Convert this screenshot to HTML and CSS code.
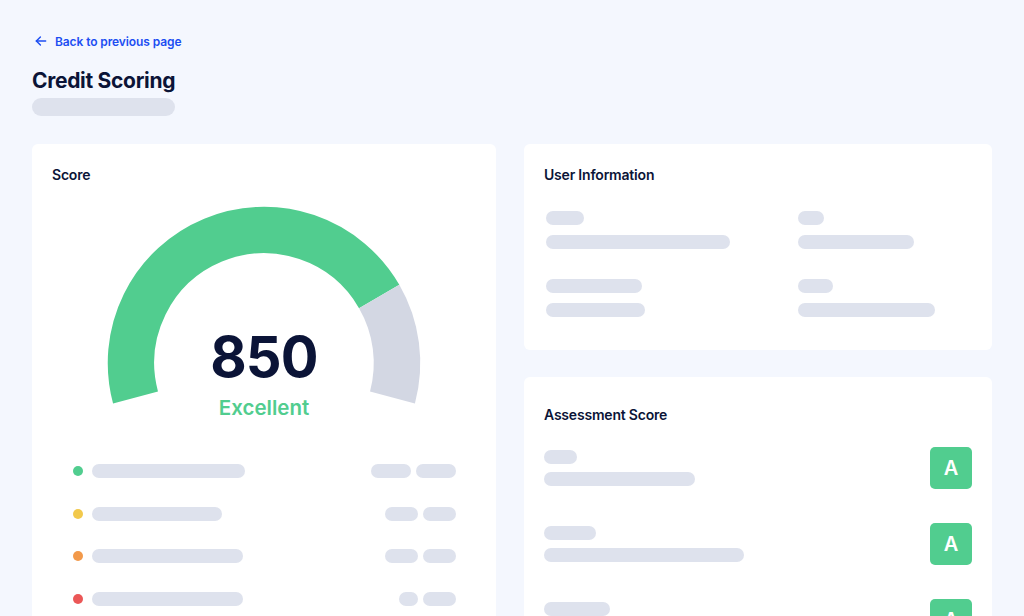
FILE: index.html
```html
<!DOCTYPE html>
<html lang="en">
<head>
    <meta charset="UTF-8">
    <meta name="viewport" content="width=device-width, initial-scale=1.0">
    <title>Credit Scoring</title>
    <link rel="stylesheet" href="styles.css">
</head>
<body>
    <div class="page">
        <header class="page-header">
            <a class="back-link" href="#">
                <svg width="14" height="14" viewBox="0 0 24 24" fill="none" stroke="currentColor" stroke-width="2.4" stroke-linecap="round" stroke-linejoin="round">
                    <path d="M20 12H4"/>
                    <path d="M11 19l-7-7 7-7"/>
                </svg>
                Back to previous page
            </a>
            <h1>Credit Scoring</h1>
            <div class="skeleton subtitle"></div>
        </header>

        <div class="layout">
            <section class="card score-card">
                <h2>Score</h2>

                <div class="gauge">
                    <svg width="320" height="204" viewBox="0 0 320 204">
                        <!-- green part: 195deg -> 30deg, grey part: 30deg -> -15deg -->
                        <path d="M31.53 194.42 A133 133 0 0 1 275.18 93.5" fill="none" stroke="#51cd8f" stroke-width="46.5"/>
                        <path d="M275.18 93.5 A133 133 0 0 1 288.47 194.42" fill="none" stroke="#d3d7e3" stroke-width="46.5"/>
                    </svg>
                    <div class="gauge-value">850</div>
                    <div class="gauge-label">Excellent</div>
                </div>

                <ul class="legend">
                    <li>
                        <span class="dot green"></span>
                        <span class="skeleton" style="width: 153px"></span>
                        <span class="pills">
                            <span class="skeleton" style="width: 40px"></span>
                            <span class="skeleton" style="width: 40px"></span>
                        </span>
                    </li>
                    <li>
                        <span class="dot yellow"></span>
                        <span class="skeleton" style="width: 130px"></span>
                        <span class="pills">
                            <span class="skeleton" style="width: 33px"></span>
                            <span class="skeleton" style="width: 33px"></span>
                        </span>
                    </li>
                    <li>
                        <span class="dot orange"></span>
                        <span class="skeleton" style="width: 151px"></span>
                        <span class="pills">
                            <span class="skeleton" style="width: 33px"></span>
                            <span class="skeleton" style="width: 33px"></span>
                        </span>
                    </li>
                    <li>
                        <span class="dot red"></span>
                        <span class="skeleton" style="width: 151px"></span>
                        <span class="pills">
                            <span class="skeleton" style="width: 19px"></span>
                            <span class="skeleton" style="width: 33px"></span>
                        </span>
                    </li>
                </ul>
            </section>

            <div class="side">
                <section class="card info-card">
                    <h2>User Information</h2>
                    <div class="info-grid">
                        <div class="field">
                            <span class="skeleton" style="width: 38px"></span>
                            <span class="skeleton" style="width: 184px"></span>
                        </div>
                        <div class="field">
                            <span class="skeleton" style="width: 26px"></span>
                            <span class="skeleton" style="width: 116px"></span>
                        </div>
                        <div class="field">
                            <span class="skeleton" style="width: 96px"></span>
                            <span class="skeleton" style="width: 99px"></span>
                        </div>
                        <div class="field">
                            <span class="skeleton" style="width: 35px"></span>
                            <span class="skeleton" style="width: 137px"></span>
                        </div>
                    </div>
                </section>

                <section class="card assessment-card">
                    <h2>Assessment Score</h2>
                    <div class="assessment-list">
                        <div class="assessment">
                            <div class="field">
                                <span class="skeleton" style="width: 33px"></span>
                                <span class="skeleton" style="width: 151px"></span>
                            </div>
                            <span class="grade">A</span>
                        </div>
                        <div class="assessment">
                            <div class="field">
                                <span class="skeleton" style="width: 52px"></span>
                                <span class="skeleton" style="width: 200px"></span>
                            </div>
                            <span class="grade">A</span>
                        </div>
                        <div class="assessment">
                            <div class="field">
                                <span class="skeleton" style="width: 66px"></span>
                                <span class="skeleton" style="width: 170px"></span>
                            </div>
                            <span class="grade">A</span>
                        </div>
                    </div>
                </section>
            </div>
        </div>
    </div>
</body>
</html>
```

FILE: styles.css
```css
* {
    box-sizing: border-box;
}

body {
    margin: 0;
    font-family: Inter, 'Noto Sans', sans-serif;
    background-color: #f4f7fe;
    color: #0b1437;
}

.page {
    padding: 32px 32px 32px;
}

.back-link {
    display: inline-flex;
    align-items: center;
    gap: 7px;
    height: 16px;
    font-size: 12px;
    font-weight: 600;
    color: #1c4ef2;
    text-decoration: none;
    letter-spacing: -0.1px;
}

.back-link svg {
    margin-left: 2px;
}

h1 {
    margin: 15px 0 0;
    font-size: 21px;
    line-height: 28px;
    font-weight: 700;
    letter-spacing: -0.3px;
}

.skeleton {
    display: block;
    height: 14px;
    border-radius: 7px;
    background-color: #dee2ed;
}

.subtitle {
    width: 143px;
    height: 18px;
    border-radius: 9px;
    margin-top: 3px;
}

.layout {
    display: grid;
    grid-template-columns: 464px 1fr;
    gap: 28px;
    margin-top: 28px;
}

.card {
    background-color: white;
    border-radius: 6px;
    padding: 21px 20px 33px;
}

.card h2 {
    margin: 0;
    font-size: 14px;
    line-height: 20px;
    font-weight: 600;
    letter-spacing: -0.2px;
}

/* score card */

.gauge {
    position: relative;
    width: 320px;
    margin: 18px auto 0;
}

.gauge svg {
    display: block;
}

.gauge-value {
    position: absolute;
    left: 0;
    right: 0;
    top: 122px;
    text-align: center;
    font-size: 56px;
    line-height: 64px;
    font-weight: 700;
    letter-spacing: -0.8px;
}

.gauge-label {
    position: absolute;
    left: 0;
    right: 0;
    top: 192px;
    text-align: center;
    font-size: 20.5px;
    line-height: 26px;
    font-weight: 600;
    color: #51cd8f;
}

.legend {
    list-style: none;
    margin: 57px 0 0;
    padding: 0 20px 0 21px;
    display: flex;
    flex-direction: column;
    gap: 28.5px;
}

.legend li {
    display: flex;
    align-items: center;
    gap: 9px;
}

.dot {
    width: 10px;
    height: 10px;
    border-radius: 50%;
    flex-shrink: 0;
}

.dot.green { background-color: #51cd8f; }
.dot.yellow { background-color: #f2c94c; }
.dot.orange { background-color: #f2994a; }
.dot.red { background-color: #eb5757; }

.pills {
    display: flex;
    gap: 5px;
    margin-left: auto;
}

/* right column */

.side {
    display: flex;
    flex-direction: column;
    gap: 27px;
}

.field {
    display: flex;
    flex-direction: column;
    gap: 10px;
}

.info-grid {
    display: grid;
    grid-template-columns: 252px 1fr;
    row-gap: 30px;
    margin-top: 26px;
    padding-left: 2px;
}

.assessment-card {
    padding-top: 28px;
}

.assessment-list {
    display: flex;
    flex-direction: column;
    gap: 34px;
    margin-top: 22px;
}

.assessment {
    display: flex;
    align-items: center;
    justify-content: space-between;
}

.assessment .field {
    gap: 8px;
}

.grade {
    width: 42px;
    height: 42px;
    border-radius: 5px;
    background-color: #51cd8f;
    color: white;
    font-size: 20px;
    font-weight: 600;
    display: flex;
    align-items: center;
    justify-content: center;
}
```
